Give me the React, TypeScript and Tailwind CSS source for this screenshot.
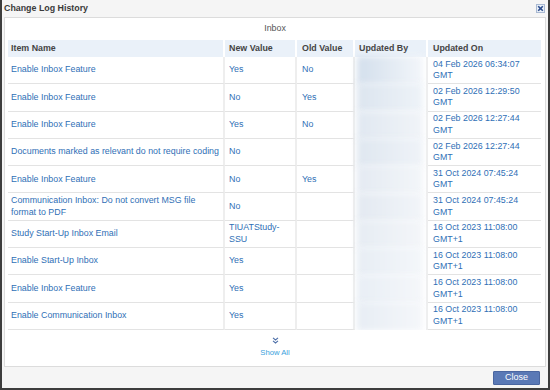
import React from "react";

type Row = {
  item: React.ReactNode;
  nv: React.ReactNode;
  ov: string;
  on: [string, string];
};

const rows: Row[] = [
  { item: "Enable Inbox Feature", nv: "Yes", ov: "No", on: ["04 Feb 2026 06:34:07", "GMT"] },
  { item: "Enable Inbox Feature", nv: "No", ov: "Yes", on: ["02 Feb 2026 12:29:50", "GMT"] },
  { item: "Enable Inbox Feature", nv: "Yes", ov: "No", on: ["02 Feb 2026 12:27:44", "GMT"] },
  { item: "Documents marked as relevant do not require coding", nv: "No", ov: "", on: ["02 Feb 2026 12:27:44", "GMT"] },
  { item: "Enable Inbox Feature", nv: "No", ov: "Yes", on: ["31 Oct 2024 07:45:24", "GMT"] },
  {
    item: (
      <>
        Communication Inbox: Do not convert MSG file
        <br />
        format to PDF
      </>
    ),
    nv: "No",
    ov: "",
    on: ["31 Oct 2024 07:45:24", "GMT"],
  },
  {
    item: "Study Start-Up Inbox Email",
    nv: (
      <>
        TIUATStudy-
        <br />
        SSU
      </>
    ),
    ov: "",
    on: ["16 Oct 2023 11:08:00", "GMT+1"],
  },
  { item: "Enable Start-Up Inbox", nv: "Yes", ov: "", on: ["16 Oct 2023 11:08:00", "GMT+1"] },
  { item: "Enable Inbox Feature", nv: "Yes", ov: "", on: ["16 Oct 2023 11:08:00", "GMT+1"] },
  { item: "Enable Communication Inbox", nv: "Yes", ov: "", on: ["16 Oct 2023 11:08:00", "GMT+1"] },
];

const blurShades = [
  "from-[#d3dfec] to-[#f3f6fa]",
  "from-[#dce5ef] to-[#eef3f8]",
  "from-[#e0e8f1] to-[#f1f4f8]",
  "from-[#dfe7f0] to-[#eff3f8]",
  "from-[#e4eaf2] to-[#f3f6f9]",
  "from-[#e3e9f1] to-[#f2f5f9]",
  "from-[#e6ecf3] to-[#f4f6f9]",
  "from-[#e7edf4] to-[#f4f7fa]",
  "from-[#e8eef5] to-[#f5f7fa]",
  "from-[#e7edf4] to-[#f5f7fa]",
];

const cellBase =
  "flex items-center border-b border-[#e3e3e3] border-r-2 border-r-[#eeeeee] leading-[11.5px] whitespace-nowrap";

export default function App() {
  return (
    <div className="w-[550px] h-[390px] bg-[#f5f5f5] border-x-2 border-b-2 border-[#3d3d3d] flex flex-col font-['Liberation_Sans',Arial,sans-serif] text-[8.85px]">
      {/* Title bar */}
      <div className="h-[17px] flex items-center justify-between pl-[2px] pr-[3px]">
        <span className="font-bold text-[#3a3a3a] text-[8.85px]">Change Log History</span>
        <div className="w-[9px] h-[9px] border border-[#a9b9d2] bg-[#e9eff7] flex items-center justify-center">
          <svg width="7" height="7" viewBox="0 0 7 7">
            <path d="M1.2 1.2 L5.8 5.8 M5.8 1.2 L1.2 5.8" stroke="#2b4c8c" strokeWidth="1.6" />
          </svg>
        </div>
      </div>

      {/* Panel */}
      <div className="flex-1 mx-[2px] border border-[#dcdcdc] bg-white flex flex-col">
        <div className="h-[22px] flex items-center justify-center text-[#555555]">Inbox</div>

        <div className="ml-[3px] mr-[4px] grid grid-cols-[217px_72px_58px_73px_113px] grid-rows-[17px_repeat(10,27.3px)]">
          {/* Header */}
          {["Item Name", "New Value", "Old Value", "Updated By", "Updated On"].map((h, i) => (
            <div
              key={h}
              className={
                "flex items-center bg-[#eaf1f9] font-bold text-[#444444] " +
                (i === 0 ? "pl-[3px] " : i === 2 || i === 4 ? "pl-[5px] " : "pl-[4px] ") +
                (i < 4 ? "border-r-2 border-white" : "")
              }
            >
              {h}
            </div>
          ))}

          {rows.map((r, idx) => (
            <React.Fragment key={idx}>
              <div className={cellBase + " pl-[3px] text-[#2f6fb6]"}>
                <span>{r.item}</span>
              </div>
              <div className={cellBase + " pl-[4px] text-[#2f6fb6]"}>
                <span>{r.nv}</span>
              </div>
              <div className={cellBase + " pl-[5px] text-[#2f6fb6]"}>
                <span>{r.ov}</span>
              </div>
              <div className="flex items-center border-r-2 border-r-[#eeeeee] pl-[2px]">
                <div className={"w-[66px] h-[29px] bg-linear-to-r blur-[3px] " + blurShades[idx]} />
              </div>
              <div className="flex items-center border-b border-[#e3e3e3] pl-[5px] leading-[11.5px] text-[#2f6fb6] whitespace-nowrap">
                <span>
                  {r.on[0]}
                  <br />
                  {r.on[1]}
                </span>
              </div>
            </React.Fragment>
          ))}
        </div>

        <div className="relative flex flex-col items-center pt-[7px] bg-white">
          <svg width="7" height="7" viewBox="0 0 7 7">
            <path d="M1 0.8 L3.5 3 L6 0.8 M1 3.8 L3.5 6 L6 3.8" stroke="#4d6fa8" strokeWidth="1.1" fill="none" />
          </svg>
          <span className="mt-[4px] text-[7.7px] leading-[10px] text-[#3a9fdc]">Show All</span>
        </div>
      </div>

      {/* Footer */}
      <div className="h-[21px] flex items-center justify-end pr-[8px]">
        <button className="w-[47px] h-[14px] bg-[#5a79b6] border border-[#4a66a0] rounded-[1px] text-white text-[9px] leading-none flex items-center justify-center">
          Close
        </button>
      </div>
    </div>
  );
}
